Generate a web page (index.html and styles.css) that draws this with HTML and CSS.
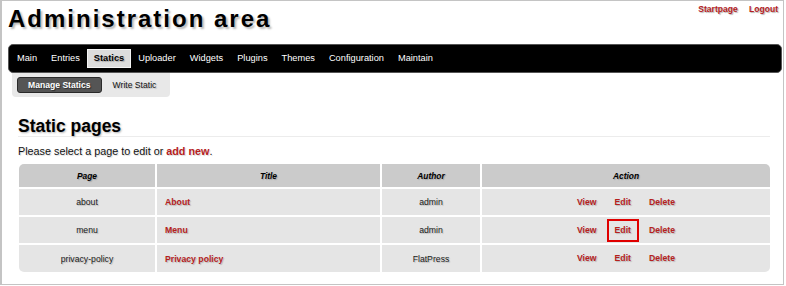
FILE: index.html
```html
<!DOCTYPE html>
<html>
<head>
<meta charset="utf-8">
<title>Administration area</title>
<link rel="stylesheet" href="styles.css">
</head>
<body>
<div class="frame">
  <div class="header">
    <h1 class="title">Administration area</h1>
    <div class="toplinks"><a href="#">Startpage</a><a href="#">Logout</a></div>
  </div>
  <nav class="nav">
    <a href="#" class="nav-item">Main</a>
    <a href="#" class="nav-item">Entries</a>
    <a href="#" class="nav-item active">Statics</a>
    <a href="#" class="nav-item">Uploader</a>
    <a href="#" class="nav-item">Widgets</a>
    <a href="#" class="nav-item">Plugins</a>
    <a href="#" class="nav-item">Themes</a>
    <a href="#" class="nav-item">Configuration</a>
    <a href="#" class="nav-item">Maintain</a>
  </nav>
  <div class="subnav">
    <a href="#" class="sub-item current">Manage Statics</a>
    <a href="#" class="sub-item">Write Static</a>
  </div>
  <h2 class="section-title">Static pages</h2>
  <p class="intro">Please select a page to edit or <a href="#">add new</a>.</p>
  <table class="pages">
    <thead>
      <tr><th class="c1">Page</th><th class="c2">Title</th><th class="c3">Author</th><th class="c4">Action</th></tr>
    </thead>
    <tbody>
      <tr>
        <td class="c1">about</td>
        <td class="c2 tl"><a href="#">About</a></td>
        <td class="c3">admin</td>
        <td class="c4"><a href="#" class="act">View</a><a href="#" class="act">Edit</a><a href="#" class="act">Delete</a></td>
      </tr>
      <tr>
        <td class="c1">menu</td>
        <td class="c2 tl"><a href="#">Menu</a></td>
        <td class="c3">admin</td>
        <td class="c4"><a href="#" class="act">View</a><a href="#" class="act marked">Edit</a><a href="#" class="act">Delete</a></td>
      </tr>
      <tr>
        <td class="c1">privacy-policy</td>
        <td class="c2 tl"><a href="#">Privacy policy</a></td>
        <td class="c3">FlatPress</td>
        <td class="c4"><a href="#" class="act">View</a><a href="#" class="act">Edit</a><a href="#" class="act">Delete</a></td>
      </tr>
    </tbody>
  </table>
</div>
</body>
</html>
```
FILE: styles.css
```css
html, body {
  margin: 0;
  padding: 0;
  background: #fff;
}
body {
  font-family: "Liberation Sans", Arial, sans-serif;
  color: #111;
}
a {
  text-decoration: none;
  color: #b5211d;
}
.frame {
  box-sizing: border-box;
  width: 784px;
  height: 285px;
  border: 1px solid #c4c4c4;
  border-left-width: 2px;
  padding: 0 1px 0 6px;
  overflow: hidden;
}
.header {
  display: flex;
  justify-content: space-between;
  align-items: flex-start;
}
.title {
  margin: 0;
  padding-top: 3px;
  font-size: 24px;
  line-height: 30px;
  letter-spacing: 2px;
  font-weight: bold;
  color: #000;
  text-shadow: 2px 2px 2px rgba(0,0,0,0.28);
}
.toplinks {
  display: flex;
  gap: 11px;
  padding: 3px 4px 0 0;
  font-size: 8.6px;
  line-height: 11px;
  font-weight: bold;
}
.toplinks a {
  text-shadow: 1px 1px 1px rgba(0,0,0,0.3);
}
.nav {
  box-sizing: border-box;
  margin-top: 10px;
  height: 29px;
  background: #000;
  border: 1px solid #555;
  border-radius: 5px;
  display: flex;
  align-items: center;
  padding-left: 1px;
}
.nav-item {
  box-sizing: border-box;
  height: 19px;
  line-height: 17px;
  padding: 0 6px;
  border: 1px solid transparent;
  font-size: 9.25px;
  color: #fff;
  white-space: nowrap;
}
.nav-item.active {
  background: #dcdcdc;
  border-color: #f4f4f4;
  color: #000;
  font-weight: bold;
  text-shadow: 1px 1px 1px rgba(0,0,0,0.25);
}
.subnav {
  box-sizing: border-box;
  margin-left: 4px;
  width: 158px;
  height: 24px;
  background: #e8e8e8;
  border-radius: 0 0 4px 4px;
  display: flex;
  align-items: center;
  padding: 0 5px;
}
.sub-item {
  box-sizing: border-box;
  flex-shrink: 0;
  white-space: nowrap;
  height: 16px;
  line-height: 14px;
  padding: 0 10px;
  border: 1px solid transparent;
  font-size: 8.6px;
  color: #111;
  text-shadow: 1px 1px 1px rgba(0,0,0,0.2);
}
.sub-item.current {
  background: #555;
  border-color: #2a2a2a;
  border-radius: 3px;
  color: #fff;
  font-weight: bold;
  text-shadow: 1px 1px 1px rgba(0,0,0,0.5);
}
.section-title {
  margin: 18.6px 12px 0 10px;
  font-size: 17.5px;
  line-height: 20px;
  font-weight: bold;
  color: #000;
  border-bottom: 1px solid #ececec;
  text-shadow: 1px 1px 2px rgba(0,0,0,0.3);
}
.intro {
  margin: 8.2px 0 0 10px;
  font-size: 10.8px;
  line-height: 13px;
  color: #111;
  text-shadow: 1px 1px 1px rgba(0,0,0,0.15);
}
.intro a {
  font-weight: bold;
}
.pages {
  margin: 6.5px 0 0 11px;
  border-collapse: separate;
  border-spacing: 0;
  table-layout: fixed;
  width: 751px;
  font-size: 8.7px;
}
.pages th, .pages td {
  box-sizing: border-box;
  padding: 0;
  text-align: center;
  border-right: 2px solid #fff;
  border-bottom: 2px solid #fff;
  color: #1a1a1a;
  text-shadow: 1px 1px 1px rgba(0,0,0,0.2);
}
.pages th {
  height: 25px;
  background: #cbcbcb;
  font-weight: bold;
  font-style: italic;
  font-size: 8.4px;
  color: #000;
}
.pages td {
  height: 28px;
  background: #e5e5e5;
}
.pages tbody tr:last-child td {
  border-bottom: 0;
  height: 27px;
}
.pages .c1 { width: 138px; }
.pages .c2 { width: 225px; }
.pages .c3 { width: 100px; }
.pages .c4 { width: 288px; border-right: 0; }
.pages th.c1 { border-top-left-radius: 5px; }
.pages th.c4 { border-top-right-radius: 5px; }
.pages tbody tr:last-child td.c1 { border-bottom-left-radius: 5px; }
.pages tbody tr:last-child td.c4 { border-bottom-right-radius: 5px; }
.pages td.tl {
  text-align: left;
  padding-left: 8px;
}
.pages td a {
  font-weight: bold;
  color: #b5211d;
}
.act {
  display: inline-block;
  box-sizing: border-box;
  padding: 3px 6px;
  line-height: 13px;
  border: 2px solid transparent;
  margin: 0 1px;
  vertical-align: middle;
}
.act.marked {
  border-color: #e00000;
}
```
